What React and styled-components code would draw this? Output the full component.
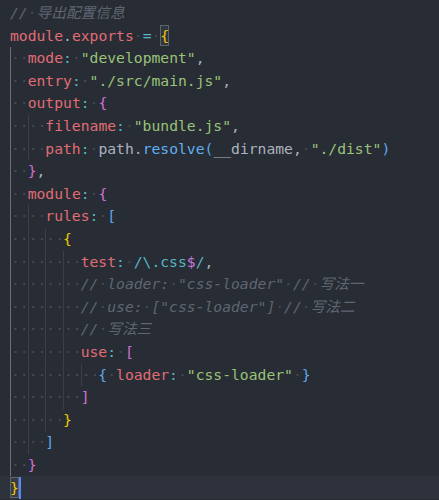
import React from "react";
import styled, { createGlobalStyle } from "styled-components";

const GlobalStyle = createGlobalStyle`
  html, body {
    margin: 0;
    padding: 0;
    background: #282c34;
  }
`;

const colors = {
  key: "#e06c75",
  str: "#98c379",
  op: "#56b6c2",
  fn: "#61afef",
  plain: "#abb2bf",
  regex: "#56b6c2",
  anchor: "#c678dd",
  comment: "#5f6672",
  b1: "#f0c800",
  b2: "#cf70d6",
  b3: "#5ca8ec",
};

const Editor = styled.div`
  width: 439px;
  height: 500px;
  overflow: hidden;
  background: #282c34;
  padding-top: 2px;
  box-sizing: border-box;
  font-family: "DejaVu Sans Mono", "Noto Sans CJK SC", monospace;
  font-size: 14.7px;
`;

const Line = styled.div`
  display: flex;
  align-items: center;
  height: 22.6px;
  line-height: 22.6px;
  padding-left: 10px;
  white-space: pre;
  background: ${(p) => (p.$current ? "#2d323c" : "transparent")};
`;

const Indent = styled.span`
  display: inline-block;
  width: 2ch;
  height: 22.6px;
  box-sizing: border-box;
  border-left: 1px solid ${(p) => (p.$active ? "#6a707b" : "#3a3f48")};
  overflow: hidden;
`;

const Ws = styled.span`
  color: rgba(171, 178, 191, 0.24);
`;

const Tok = styled.span`
  color: ${(p) => colors[p.$kind] || colors.plain};
  font-style: ${(p) => (p.$kind === "comment" ? "italic" : "normal")};
`;

const Matched = styled.span`
  display: inline-block;
  height: 21px;
  line-height: 21px;
  box-shadow: inset 0 0 0 1px #5d6470;
  background: rgba(255, 255, 255, 0.05);
  color: ${(p) => colors[p.$kind]};
`;

const Cursor = styled.span`
  display: inline-block;
  width: 2px;
  height: 22px;
  background: #528bff;
`;

const renderText = (text) =>
  text.split(/( +)/).map((part, i) =>
    part.startsWith(" ") && part.trim() === "" ? (
      <Ws key={i}>{"·".repeat(part.length)}</Ws>
    ) : (
      part
    )
  );

const lines = [
  { indent: 0, toks: [["comment", "// 导出配置信息"]] },
  {
    indent: 0,
    toks: [
      ["key", "module"],
      ["plain", "."],
      ["key", "exports"],
      ["plain", " "],
      ["op", "="],
      ["plain", " "],
      ["match", "{", "b1"],
    ],
  },
  { indent: 2, toks: [["key", "mode"], ["op", ":"], ["plain", " "], ["str", '"development"'], ["plain", ","]] },
  { indent: 2, toks: [["key", "entry"], ["op", ":"], ["plain", " "], ["str", '"./src/main.js"'], ["plain", ","]] },
  { indent: 2, toks: [["key", "output"], ["op", ":"], ["plain", " "], ["b2", "{"]] },
  { indent: 4, toks: [["key", "filename"], ["op", ":"], ["plain", " "], ["str", '"bundle.js"'], ["plain", ","]] },
  {
    indent: 4,
    toks: [
      ["key", "path"],
      ["op", ":"],
      ["plain", " path."],
      ["fn", "resolve"],
      ["b3", "("],
      ["plain", "__dirname, "],
      ["str", '"./dist"'],
      ["b3", ")"],
    ],
  },
  { indent: 2, toks: [["b2", "}"], ["plain", ","]] },
  { indent: 2, toks: [["key", "module"], ["op", ":"], ["plain", " "], ["b2", "{"]] },
  { indent: 4, toks: [["key", "rules"], ["op", ":"], ["plain", " "], ["b3", "["]] },
  { indent: 6, toks: [["b1", "{"]] },
  {
    indent: 8,
    toks: [
      ["key", "test"],
      ["op", ":"],
      ["plain", " "],
      ["regex", "/\\.css"],
      ["anchor", "$"],
      ["regex", "/"],
      ["plain", ","],
    ],
  },
  { indent: 8, toks: [["comment", '// loader: "css-loader" // 写法一']] },
  { indent: 8, toks: [["comment", '// use: ["css-loader"] // 写法二']] },
  { indent: 8, toks: [["comment", "// 写法三"]] },
  { indent: 8, toks: [["key", "use"], ["op", ":"], ["plain", " "], ["b2", "["]] },
  {
    indent: 10,
    toks: [
      ["b3", "{"],
      ["plain", " "],
      ["key", "loader"],
      ["op", ":"],
      ["plain", " "],
      ["str", '"css-loader"'],
      ["plain", " "],
      ["b3", "}"],
    ],
  },
  { indent: 8, toks: [["b2", "]"]] },
  { indent: 6, toks: [["b1", "}"]] },
  { indent: 4, toks: [["b3", "]"]] },
  { indent: 2, toks: [["b2", "}"]] },
  { indent: 0, toks: [["match", "}", "b1"], ["cursor"]], current: true },
];

const CodeLine = ({ line }) => {
  const units = line.indent / 2;
  return (
    <Line $current={line.current}>
      {Array.from({ length: units }).map((_, i) => (
        <Indent key={i} $active={i === 0}>
          <Ws>··</Ws>
        </Indent>
      ))}
      {line.toks.map(([kind, text, extra], i) => {
        if (kind === "cursor") return <Cursor key={i} />;
        if (kind === "match")
          return (
            <Matched key={i} $kind={extra}>
              {text}
            </Matched>
          );
        return (
          <Tok key={i} $kind={kind}>
            {renderText(text)}
          </Tok>
        );
      })}
    </Line>
  );
};

export default function App() {
  return (
    <>
      <GlobalStyle />
      <Editor>
        {lines.map((line, i) => (
          <CodeLine key={i} line={line} />
        ))}
      </Editor>
    </>
  );
}
